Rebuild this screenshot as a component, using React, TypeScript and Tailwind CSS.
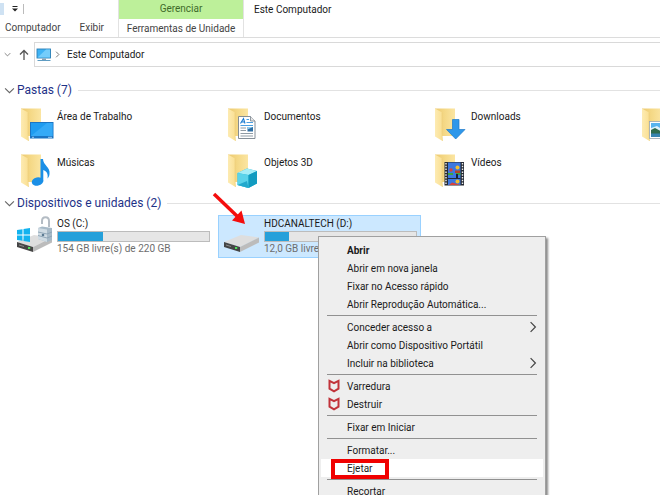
import type { ReactNode } from "react";

function FolderIcon({ children }: { children?: ReactNode }) {
  return (
    <svg viewBox="0 0 38 36" className="h-9 w-[38px] shrink-0" aria-hidden="true">
      <defs>
        <linearGradient id="folderBack" x1="0" y1="0" x2="1" y2="0">
          <stop offset="0" stopColor="#ecc970" />
          <stop offset="0.5" stopColor="#f5d987" />
          <stop offset="1" stopColor="#fbe5a2" />
        </linearGradient>
        <linearGradient id="folderFlap" x1="0" y1="0" x2="1" y2="0">
          <stop offset="0" stopColor="#fdebb2" />
          <stop offset="1" stopColor="#fadf92" />
        </linearGradient>
      </defs>
      <path d="M5 0.500H25V28H13L6 28Z" fill="url(#folderBack)" />
      <path d="M5 0.500L12 4.500V26L12.500 33L5 28.500Z" fill="url(#folderFlap)" />
      <path d="M12 4.500V26L12.500 33" fill="none" stroke="#ecce78" strokeWidth="0.600" />
      {children}
    </svg>
  );
}

const DesktopArt = () => (
  <>
    <rect x="14" y="14" width="23.500" height="16.500" fill="#1b75c4" />
    <rect x="15" y="15" width="21.500" height="13" fill="#1f9cf0" />
    <path d="M15 28L31 15H36.500V28Z" fill="#35aaf7" />
    <path d="M16 29.300H18M32 29.300H36" stroke="#bfe3ff" strokeWidth="0.800" />
  </>
);

const MusicArt = () => (
  <g fill="#1b8fe6">
    <ellipse cx="21.500" cy="27.500" rx="5.800" ry="4.200" transform="rotate(-12 21.500 27.500)" />
    <path d="M24.500 5H27C27 11 34.500 13 33.500 20C33.300 22.500 32 24 31.500 24.500C32.500 19 30 17 27.300 16V27.500H24.500Z" />
  </g>
);

const DocumentArt = () => (
  <>
    <path d="M15.500 8.500H27.500L32 13V30.500H15.500Z" fill="#fff" stroke="#77828c" strokeWidth="0.900" />
    <path d="M27.500 8.500V13H32" fill="#e6e6e6" stroke="#77828c" strokeWidth="0.800" />
    <path d="M17.500 15.500L20.500 10.500L22 15.500M18.500 14H21.500" fill="none" stroke="#1679d0" strokeWidth="1.100" />
    <path d="M23.500 11.500H26M23.500 14.500H30M17.500 17.500H30" stroke="#4c9fe0" strokeWidth="1" />
    <rect x="24.500" y="19" width="5.500" height="4.500" fill="#2f6ea3" />
    <path d="M24.500 19H30L24.500 21.500Z" fill="#8fd0f4" />
    <path d="M17.500 20H23M17.500 22.500H23M17.500 25.500H30M17.500 28H30" stroke="#85919b" strokeWidth="0.900" />
  </>
);

const CubeArt = () => (
  <>
    <path d="M14.500 19L24 14.500L34 17V29.500L25.500 34L14.500 31Z" fill="#27b5d6" />
    <path d="M14.500 19L24 14.500L34 17L25.500 21Z" fill="#a5edf7" />
    <path d="M14.500 19L25.500 21V34L14.500 31Z" fill="#5bd3ea" />
    <path d="M25.500 21L34 17V29.500L25.500 34Z" fill="#129bc0" />
    <path d="M14.500 31L24 27L25.500 34Z" fill="#23a9cd" />
  </>
);

const DownloadArt = () => (
  <path d="M22.500 11.500H29V21.500H35L25.700 31L16.500 21.500H22.500Z" fill="#2e97ea" stroke="#1b79c9" strokeWidth="0.700" />
);

const VideoArt = () => (
  <>
    <rect x="14.500" y="8" width="19.500" height="23.500" fill="#252a33" />
    <path d="M16 9V31.500M32.500 9V31.500" stroke="#f1f1f1" strokeWidth="1.400" strokeDasharray="1.500 1.300" />
    <rect x="18" y="8.500" width="12.500" height="22.500" fill="#3c78e0" />
    <path d="M18 19H23V21H18ZM26 19H30.500V21H26Z" fill="#3da53d" />
    <circle cx="21" cy="16" r="1.700" fill="#d8433b" />
    <circle cx="27.500" cy="13.500" r="2" fill="#f3bf2f" />
    <path d="M25 16.500H30V19H25Z" fill="#b2442b" />
    <path d="M27 20V24" stroke="#17203d" strokeWidth="2" />
    <circle cx="27.500" cy="27.500" r="2" fill="#f3bf2f" />
    <path d="M18 24.500H30.500" stroke="#252a33" strokeWidth="1" />
    <path d="M19 31L22 28.500L30.500 31H19Z" fill="#d8433b" />
  </>
);

const PictureArt = () => (
  <>
    <rect x="12.500" y="13.500" width="24.500" height="17" fill="#fff" stroke="#9aa7b0" strokeWidth="0.800" />
    <rect x="14" y="15" width="21.500" height="14" fill="#58b4ee" />
    <path d="M14 20L20 18L26 22L35.500 20V23H14Z" fill="#dff2fb" />
    <path d="M14 22L18 20L26 24.500L35.500 23V26H14Z" fill="#2d6b4c" />
    <path d="M14 25.500H35.500V29H14Z" fill="#3684b0" />
  </>
);

function DriveArt() {
  return (
    <>
      <path d="M1 26L18 19L36 21.500L17 31Z" fill="#dedede" />
      <path d="M1 26L17 31V36L1 31Z" fill="#454545" />
      <path d="M17 31L36 21.500V26.500L17 36Z" fill="#bcbcbc" />
      <path d="M3 29L8 30.500" stroke="#8b8b8b" strokeWidth="1" />
      <rect x="12" y="31" width="2.200" height="2" fill="#4fe05c" />
    </>
  );
}

function SystemDriveIcon() {
  return (
    <svg viewBox="0 0 38 36" className="h-9 w-[38px] shrink-0" aria-hidden="true">
      <DriveArt />
      <path d="M1 14L6.500 13.200V18.500H1ZM7.500 13L14 12V18.500H7.500ZM1 19.500H6.500V24.800L1 24ZM7.500 19.500H14V26L7.500 25Z" fill="#12b3ef" />
      <path d="M26 8V5C26 2.500 27.500 1.300 29.500 1.300C31.500 1.300 33 2.500 33 5V11" fill="none" stroke="#b4bcc4" strokeWidth="2" />
      <path d="M22 12L26 10.500L36 12V24L31 26L22 23Z" fill="#a6b9c7" />
      <path d="M22 12L31 13.500V26L22 23Z" fill="#cfdbe3" />
      <path d="M22 16L31 18L36 16M22 19.500L31 22L36 20" fill="none" stroke="#8aa2b3" strokeWidth="0.900" />
      <circle cx="27" cy="19" r="1.300" fill="#5c7b92" />
    </svg>
  );
}

function DriveIcon() {
  return (
    <svg viewBox="0 0 38 36" className="h-9 w-[38px] shrink-0" aria-hidden="true">
      <DriveArt />
    </svg>
  );
}

function MonitorIcon() {
  return (
    <svg viewBox="0 0 16 14" className="h-3.5 w-4 shrink-0" aria-hidden="true">
      <rect x="1" y="1" width="13.500" height="9" fill="#3fb3f5" stroke="#2b7eb4" strokeWidth="0.900" />
      <path d="M1.500 9.500L10 1.500H14V9.500Z" fill="#74cdfb" />
      <path d="M6 10.500H10V12H6Z" fill="#8aa2b3" />
      <path d="M1.500 12.500H14.500" stroke="#5f9cc2" strokeWidth="1" />
    </svg>
  );
}

function ShieldIcon() {
  return (
    <svg viewBox="0 0 12 14" className="h-3.5 w-3 shrink-0" aria-hidden="true">
      <path d="M1.500 1.800L6 4.200L10.500 1.800V9.700L6 12.300L1.500 9.700Z" fill="none" stroke="#c1333a" strokeWidth="2" />
    </svg>
  );
}

function Chevron({ d, className }: { d: string; className: string }) {
  return (
    <svg viewBox="0 0 10 10" className={className} fill="none" stroke="currentColor" aria-hidden="true">
      <path d={d} />
    </svg>
  );
}

const DOWN = "M1 3L5 7L9 3";
const RIGHT = "M3 1L7 5L3 9";

function Section({ title, children }: { title: string; children: ReactNode }) {
  return (
    <section>
      <h2 className="flex h-5 items-center pl-1">
        <button className="flex items-center gap-0.5 text-[12px] leading-5 text-[#1e3287]">
          <Chevron d={DOWN} className="size-[11px] text-[#666]" />
          {title}
        </button>
        <span className="ml-1.5 h-px flex-1 bg-[#e2e2e2]" />
      </h2>
      {children}
    </section>
  );
}

const folders = [
  { name: "Área de Trabalho", Art: DesktopArt },
  { name: "Documentos", Art: DocumentArt },
  { name: "Downloads", Art: DownloadArt },
  { name: "", Art: PictureArt },
  { name: "Músicas", Art: MusicArt },
  { name: "Objetos 3D", Art: CubeArt },
  { name: "Vídeos", Art: VideoArt },
];

function Drive({ name, free, fill, icon, selected }: { name: string; free: string; fill: string; icon: ReactNode; selected?: boolean }) {
  return (
    <li className={`flex h-[43px] items-start gap-[3px] border pl-1 ${selected ? "border-[#99d1ff] bg-[#cce8ff]" : "border-transparent"}`}>
      {icon}
      <div className="flex-1 pr-[3px]">
        <div className="h-[15px] leading-[15px]">{name}</div>
        <div className="h-[11px] border border-[#bcbcbc] bg-[#e6e6e6]">
          <div className={`h-full bg-[#26a0da] ${fill}`} />
        </div>
        <div className="leading-[14px] text-[#6d6d6d]">{free}</div>
      </div>
    </li>
  );
}

type Entry = { label: string; bold?: boolean; submenu?: boolean; shield?: boolean; hot?: boolean };

const menu: Entry[][] = [
  [
    { label: "Abrir", bold: true },
    { label: "Abrir em nova janela" },
    { label: "Fixar no Acesso rápido" },
    { label: "Abrir Reprodução Automática..." },
  ],
  [
    { label: "Conceder acesso a", submenu: true },
    { label: "Abrir como Dispositivo Portátil" },
    { label: "Incluir na biblioteca", submenu: true },
  ],
  [
    { label: "Varredura", shield: true },
    { label: "Destruir", shield: true },
  ],
  [{ label: "Fixar em Iniciar" }],
  [{ label: "Formatar..." }, { label: "Ejetar", hot: true }],
  [{ label: "Recortar" }],
];

function ContextMenu() {
  return (
    <div role="menu" className="absolute top-[236px] left-[318px] w-[228px] border border-[#a0a0a0] bg-[#eeeeee] px-0.5 py-1 shadow-[2px_2px_2px_rgba(0,0,0,0.45)]">
      {menu.map((group, i) => (
        <div key={i}>
          {i > 0 && <div role="separator" className="mx-1.5 flex h-[5px] items-center"><div className="h-px flex-1 bg-[#919191]" /></div>}
          {group.map((item) => (
            <button
              key={item.label}
              role="menuitem"
              className={`relative flex h-[18px] w-full items-center pr-1 text-left ${item.bold ? "font-bold" : ""} ${item.hot ? "bg-white" : ""}`}
            >
              <span className="flex w-[26px] shrink-0 justify-center">{item.shield && <ShieldIcon />}</span>
              <span className="flex-1">{item.label}</span>
              {item.submenu && <Chevron d={RIGHT} className="size-3 text-[#444]" />}
              {item.hot && <span className="absolute top-0 left-2.5 h-5 w-[58px] border-4 border-[#f00000]" />}
            </button>
          ))}
        </div>
      ))}
    </div>
  );
}

export default function App() {
  return (
    <div className="relative h-screen overflow-hidden bg-white font-['Roboto','Noto_Sans',sans-serif] text-[10px] text-[#1a1a1a]">
      <header className="flex h-[38px] border-b border-[#dcdcdc] leading-[19px]">
        <div className="flex w-[118px] flex-col">
          <div className="flex h-[19px] items-center">
            <span className="h-3 w-1 bg-[#cfe2f3]" />
            <button aria-label="Personalizar" className="ml-1.5 flex w-[9px] justify-center">
              <svg viewBox="0 0 8 8" className="size-2" aria-hidden="true">
                <path d="M1.500 1.500H6.500" stroke="#222" />
                <path d="M1 3.500H7L4 6.500Z" fill="#222" />
              </svg>
            </button>
            <span className="ml-1 h-2.5 w-px bg-[#bbb]" />
          </div>
          <nav className="flex h-[19px] items-center justify-between pr-3.5 pl-[5px] text-[#444]">
            <button>Computador</button>
            <button>Exibir</button>
          </nav>
        </div>
        <div className="w-[126px] border-x border-[#e2e2e2] text-center">
          <div className="h-[19px] bg-[#bdf09a] leading-[17px] text-[#3f6b2a]">Gerenciar</div>
          <button className="block w-full text-center text-[#444]">Ferramentas de Unidade</button>
        </div>
        <h1 className="pl-2.5">Este Computador</h1>
      </header>

      <div className="mt-1 flex h-[25px] items-stretch">
        <div className="flex w-[34px] items-center text-[#555]">
          <button aria-label="Locais recentes" className="ml-1"><Chevron d={DOWN} className="size-[7px]" /></button>
          <button aria-label="Acima" className="ml-2">
            <svg viewBox="0 0 10 12" className="h-3 w-2.5" fill="none" stroke="#555" strokeWidth="1.300" aria-hidden="true">
              <path d="M5 11V1.500M1 5.500L5 1.500L9 5.500" />
            </svg>
          </button>
        </div>
        <div className="flex flex-1 items-center border border-r-0 border-[#d9d9d9] pl-px">
          <MonitorIcon />
          <Chevron d={RIGHT} className="ml-0.5 size-[7px] text-[#444]" />
          <button className="ml-1.5">Este Computador</button>
        </div>
      </div>

      <main className="pt-[13px]">
        <Section title="Pastas (7)">
          <ul className="grid grid-cols-[repeat(4,203px)] gap-x-1 gap-y-2.5 pt-2 pb-[3px] pl-[11px]">
            {folders.map(({ name, Art }) => (
              <li key={name} className="flex h-9 items-start gap-[3px] pl-[5px]">
                <FolderIcon><Art /></FolderIcon>
                <span className="leading-[17px]">{name}</span>
              </li>
            ))}
          </ul>
        </Section>
        <Section title="Dispositivos e unidades (2)">
          <ul className="grid grid-cols-[repeat(2,203px)] gap-x-1 pt-0.5 pl-[11px]">
            <Drive name="OS (C:)" free="154 GB livre(s) de 220 GB" fill="w-[30%]" icon={<SystemDriveIcon />} />
            <Drive name="HDCANALTECH (D:)" free="12,0 GB livre(s)" fill="w-[16%]" icon={<DriveIcon />} selected />
          </ul>
        </Section>
      </main>

      <svg viewBox="0 0 36 36" className="absolute top-[191px] left-[211px] size-9" aria-hidden="true">
        <path d="M3 3L27 26" stroke="#f40d0d" strokeWidth="3.500" />
        <path d="M34 33L21 29.500L30.500 19.500Z" fill="#f40d0d" />
      </svg>

      <ContextMenu />
    </div>
  );
}
